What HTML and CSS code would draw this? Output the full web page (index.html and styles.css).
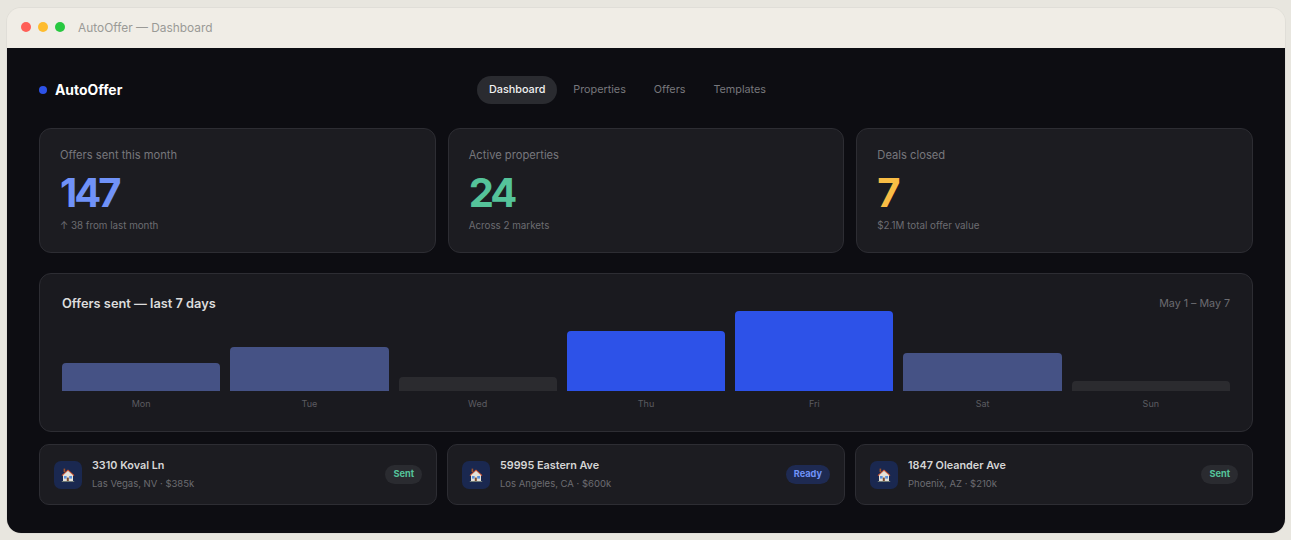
FILE: index.html
```html
<!DOCTYPE html>
<html lang="en">
<head>
<meta charset="utf-8">
<title>AutoOffer — Dashboard</title>
<link rel="stylesheet" href="styles.css">
</head>
<body>
<svg class="sprite" width="0" height="0" aria-hidden="true">
  <symbol id="house" viewBox="0 0 16 16">
    <rect x="3.6" y="1.6" width="1.6" height="3.4" fill="#a5532a"/>
    <path d="M1.6 8.2 8 2.4l6.4 5.8-.8.9L8 4.2 2.4 9.1z" fill="#d8542f"/>
    <path d="M3 8.2 8 3.8l5 4.4v5.8H3z" fill="#e6e1d8"/>
    <path d="M1.8 14h12.4v1H1.8z" fill="#6f7a78"/>
    <rect x="4" y="9" width="2.6" height="2.6" fill="#5b8fd9"/>
    <rect x="9.2" y="9" width="2.8" height="2.6" fill="#5b8fd9"/>
    <rect x="6.8" y="10.6" width="2" height="3.4" fill="#7a4a2c"/>
  </symbol>
</svg>
<div class="window">
  <header class="titlebar">
    <span class="light red"></span>
    <span class="light yellow"></span>
    <span class="light green"></span>
    <span class="window-title">AutoOffer — Dashboard</span>
  </header>
  <main class="app">
    <div class="topbar">
      <div class="logo"><span class="logo-dot"></span>AutoOffer</div>
      <nav class="nav">
        <a class="nav-item active">Dashboard</a>
        <a class="nav-item">Properties</a>
        <a class="nav-item">Offers</a>
        <a class="nav-item">Templates</a>
      </nav>
    </div>
    <section class="stats">
      <div class="stat">
        <div class="stat-label">Offers sent this month</div>
        <div class="stat-value blue">147</div>
        <div class="stat-note">↑ 38 from last month</div>
      </div>
      <div class="stat">
        <div class="stat-label">Active properties</div>
        <div class="stat-value green-text">24</div>
        <div class="stat-note">Across 2 markets</div>
      </div>
      <div class="stat">
        <div class="stat-label">Deals closed</div>
        <div class="stat-value amber">7</div>
        <div class="stat-note">$2.1M total offer value</div>
      </div>
    </section>
    <section class="chart">
      <div class="chart-head">
        <div class="chart-title">Offers sent — last 7 days</div>
        <div class="chart-range">May 1 – May 7</div>
      </div>
      <div class="bars">
        <div class="col"><div class="plot"><div class="bar mid" style="height:28px"></div></div><div class="day">Mon</div></div>
        <div class="col"><div class="plot"><div class="bar mid" style="height:44px"></div></div><div class="day">Tue</div></div>
        <div class="col"><div class="plot"><div class="bar low" style="height:14px"></div></div><div class="day">Wed</div></div>
        <div class="col"><div class="plot"><div class="bar high" style="height:60px"></div></div><div class="day">Thu</div></div>
        <div class="col"><div class="plot"><div class="bar high" style="height:80px"></div></div><div class="day">Fri</div></div>
        <div class="col"><div class="plot"><div class="bar mid" style="height:38px"></div></div><div class="day">Sat</div></div>
        <div class="col"><div class="plot"><div class="bar low" style="height:10px"></div></div><div class="day">Sun</div></div>
      </div>
    </section>
    <section class="props">
      <div class="prop">
        <div class="prop-icon"><svg width="16" height="16"><use href="#house"/></svg></div>
        <div class="prop-info">
          <div class="prop-name">3310 Koval Ln</div>
          <div class="prop-meta">Las Vegas, NV · $385k</div>
        </div>
        <span class="badge sent">Sent</span>
      </div>
      <div class="prop">
        <div class="prop-icon"><svg width="16" height="16"><use href="#house"/></svg></div>
        <div class="prop-info">
          <div class="prop-name">59995 Eastern Ave</div>
          <div class="prop-meta">Los Angeles, CA · $600k</div>
        </div>
        <span class="badge ready">Ready</span>
      </div>
      <div class="prop">
        <div class="prop-icon"><svg width="16" height="16"><use href="#house"/></svg></div>
        <div class="prop-info">
          <div class="prop-name">1847 Oleander Ave</div>
          <div class="prop-meta">Phoenix, AZ · $210k</div>
        </div>
        <span class="badge sent">Sent</span>
      </div>
    </section>
  </main>
</div>
</body>
</html>
```

FILE: styles.css
```css
* { box-sizing: border-box; }
html, body { margin: 0; height: 100%; }
body {
  background: #e8e6df;
  padding: 8px 6px 7px 7px;
  font-family: "Inter", "Liberation Sans", sans-serif;
  overflow: hidden;
}
.sprite { position: absolute; }
.window {
  height: 525px;
  border-radius: 14px;
  overflow: hidden;
  display: flex;
  flex-direction: column;
  box-shadow: 0 0 0 1px rgba(0,0,0,.03);
}
.titlebar {
  height: 40px;
  flex: none;
  background: #f0ede6;
  display: flex;
  align-items: center;
  padding: 0 0 2px 14px;
  gap: 7px;
}
.light { width: 10px; height: 10px; border-radius: 50%; }
.red { background: #ff5f57; }
.yellow { background: #febc2e; }
.green { background: #28c840; }
.window-title { margin-left: 6px; font-size: 11.9px; color: #9a9a96; }
.app {
  flex: 1;
  background: #0d0d12;
  padding: 28px 32px 28px;
  display: flex;
  flex-direction: column;
}
.topbar {
  height: 28px;
  display: grid;
  grid-template-columns: 438px auto;
  align-items: center;
  margin-bottom: 24px;
}
.logo {
  display: flex;
  align-items: center;
  gap: 8px;
  color: #fff;
  font-size: 13.9px;
  font-weight: 700;
}
.logo-dot { width: 8px; height: 8px; border-radius: 50%; background: #2d52e8; }
.nav { display: flex; gap: 4px; }
.nav-item {
  padding: 6px 12px;
  height: 28px;
  border-radius: 14px;
  font-size: 10.8px;
  line-height: 16px;
  color: #77777c;
}
.nav-item.active { background: #2a2b30; color: #f2f2f2; font-weight: 500; }
.stats { display: grid; grid-template-columns: repeat(3, 1fr); gap: 12px; }
.stat {
  height: 125px;
  background: #1c1c21;
  border: 1px solid #2d2d33;
  border-radius: 12px;
  padding: 19px 20px 0;
}
.stat-label { font-size: 11.2px; line-height: 14px; color: #77777c; }
.stat-value { font-size: 40px; line-height: 44px; font-weight: 700; margin-top: 9px; letter-spacing: -3px; }
.blue { color: #7092f8; }
.green-text { color: #55c39a; }
.amber { color: #f9bd45; }
.stat-note { font-size: 9.8px; line-height: 14px; margin-top: 4px; color: #6c6c71; }
.chart {
  height: 159px;
  margin-top: 20px;
  background: #1a1a1f;
  border: 1px solid #2d2d33;
  border-radius: 12px;
  padding: 22px 22px 0;
}
.chart-head { display: flex; justify-content: space-between; align-items: center; height: 15px; }
.chart-title { font-size: 12.8px; font-weight: 600; color: #dcdcdc; }
.chart-range { font-size: 10.7px; color: #6c6c71; }
.bars { display: flex; gap: 10px; }
.col { flex: 1; }
.plot { height: 80px; display: flex; align-items: flex-end; }
.bar { width: 100%; border-radius: 4px 4px 0 0; }
.high { background: #2d52e8; }
.mid { background: #455285; }
.low { background: #2b2b2f; }
.day { text-align: center; font-size: 9px; line-height: 12px; margin-top: 7px; color: #5c5c61; }
.props { display: grid; grid-template-columns: repeat(3, 1fr); gap: 10px; margin-top: 12px; }
.prop {
  height: 61px;
  background: #1c1c21;
  border: 1px solid #2d2d33;
  border-radius: 10px;
  padding: 0 14px;
  display: flex;
  align-items: center;
  gap: 10px;
}
.prop-icon {
  width: 28px;
  height: 28px;
  flex: none;
  border-radius: 7px;
  background: #1a2850;
  display: flex;
  align-items: center;
  justify-content: center;
}
.prop-info { flex: 1; padding-top: 1px; }
.prop-name { font-size: 10.8px; line-height: 14px; font-weight: 600; color: #d6d6d6; }
.prop-meta { font-size: 9.5px; line-height: 14px; margin-top: 4px; color: #6c6c71; }
.badge {
  height: 19px;
  padding: 0 8px;
  border-radius: 10px;
  font-size: 9.2px;
  line-height: 18px;
  font-weight: 700;
}
.sent { background: #2a2b30; color: #55c39a; }
.ready { background: #1e2a52; color: #7092f8; }
```
